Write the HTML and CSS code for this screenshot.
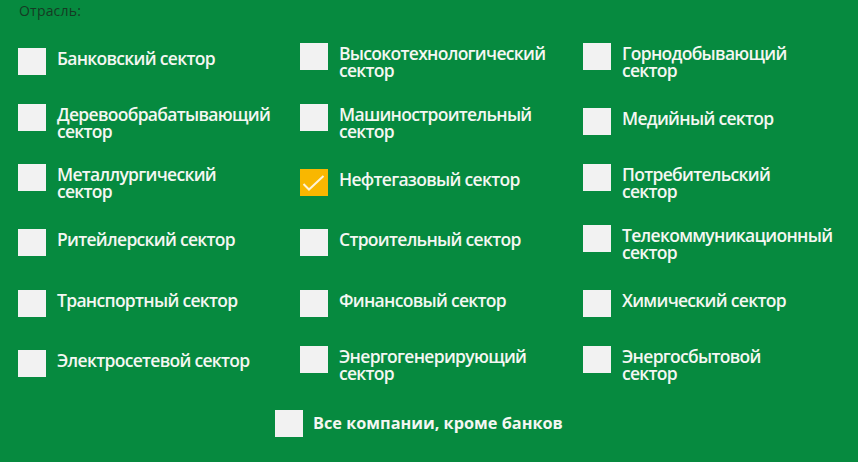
FILE: index.html
```html
<!DOCTYPE html>
<html lang="ru">

<head>
    <meta charset="UTF-8">
    <meta name="viewport" content="width=device-width, initial-scale=1.0">
    <title>Отрасль</title>
    <link rel="stylesheet" href="styles.css">
</head>

<body>

    <div class="filter">
        <div class="filter-title">Отрасль:</div>

        <div class="sectors">
            <label class="sector"><span class="box"></span><span class="name">Банковский сектор</span></label>
            <label class="sector"><span class="box"></span><span class="name">Высокотехнологический<br>сектор</span></label>
            <label class="sector"><span class="box"></span><span class="name">Горнодобывающий<br>сектор</span></label>

            <label class="sector"><span class="box"></span><span class="name">Деревообрабатывающий<br>сектор</span></label>
            <label class="sector"><span class="box"></span><span class="name">Машиностроительный<br>сектор</span></label>
            <label class="sector"><span class="box"></span><span class="name">Медийный сектор</span></label>

            <label class="sector"><span class="box"></span><span class="name">Металлургический<br>сектор</span></label>
            <label class="sector checked">
                <span class="box">
                    <svg width="28" height="27" viewBox="0 0 28 27">
                        <polyline points="3.5,15 9,20.5 23.5,7" fill="none" stroke="#fdf3d6" stroke-width="2" />
                    </svg>
                </span>
                <span class="name">Нефтегазовый сектор</span>
            </label>
            <label class="sector"><span class="box"></span><span class="name">Потребительский<br>сектор</span></label>

            <label class="sector"><span class="box"></span><span class="name">Ритейлерский сектор</span></label>
            <label class="sector"><span class="box"></span><span class="name">Строительный сектор</span></label>
            <label class="sector"><span class="box"></span><span class="name">Телекоммуникационный<br>сектор</span></label>

            <label class="sector"><span class="box"></span><span class="name">Транспортный сектор</span></label>
            <label class="sector"><span class="box"></span><span class="name">Финансовый сектор</span></label>
            <label class="sector"><span class="box"></span><span class="name">Химический сектор</span></label>

            <label class="sector"><span class="box"></span><span class="name">Электросетевой сектор</span></label>
            <label class="sector"><span class="box"></span><span class="name">Энергогенерирующий<br>сектор</span></label>
            <label class="sector"><span class="box"></span><span class="name">Энергосбытовой<br>сектор</span></label>
        </div>

        <div class="extra">
            <label class="sector sector-all"><span class="box"></span><span class="name">Все компании, кроме банков</span></label>
        </div>
    </div>

</body>

</html>
```

FILE: styles.css
```css
html,
body {
    margin: 0;
    height: 100%;
}

body {
    background: #068a3f;
    font-family: "Open Sans", "Noto Sans", sans-serif;
    color: #f4f7f2;
    overflow: hidden;
}

.filter {
    padding: 2px 0 0 18px;
}

.filter-title {
    font-size: 14px;
    line-height: 17px;
    color: #163a24;
    padding-left: 1px;
    letter-spacing: 0.2px;
}

.sectors {
    margin-top: 25px;
    display: grid;
    grid-template-columns: 282px 283px 1fr;
    grid-auto-rows: 34px;
    row-gap: 26.5px;
    align-items: center;
}

.sector {
    display: flex;
    align-items: flex-start;
    gap: 11px;
    cursor: pointer;
}

.box {
    flex: none;
    width: 28px;
    height: 27px;
    background: #f2f2f2;
}

.box svg {
    display: block;
}

.checked .box {
    background: #f9b700;
}

.name {
    font-size: 17.5px;
    line-height: 17px;
    padding-top: 2px;
    font-weight: 600;
    letter-spacing: -0.7px;
}

.extra {
    margin-top: 29.5px;
    padding-left: 257px;
    display: flex;
}

.sector-all {
    gap: 10px;
    align-items: center;
}

.sector-all .name {
    font-weight: 700;
    font-size: 16.3px;
    padding-top: 0;
    letter-spacing: 0;
}
```
